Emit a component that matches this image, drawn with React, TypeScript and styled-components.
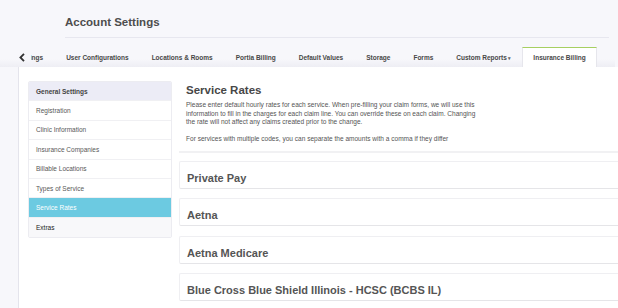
import React from "react";
import styled, { createGlobalStyle } from "styled-components";

const GlobalStyle = createGlobalStyle`
  html, body {
    margin: 0;
    padding: 0;
    background: #f7f7fb;
    font-family: "Liberation Sans", Arial, Helvetica, sans-serif;
    color: #555;
  }
  #root {
    min-height: 308px;
  }
`;

const tabs = [
  "Settings",
  "User Configurations",
  "Locations & Rooms",
  "Portia Billing",
  "Default Values",
  "Storage",
  "Forms",
  "Custom Reports",
  "Insurance Billing",
];

const navItems = [
  "Registration",
  "Clinic Information",
  "Insurance Companies",
  "Billable Locations",
  "Types of Service",
  "Service Rates",
];

const payers = [
  "Private Pay",
  "Aetna",
  "Aetna Medicare",
  "Blue Cross Blue Shield Illinois - HCSC (BCBS IL)",
];

export default function App() {
  return (
    <>
      <GlobalStyle />
      <Page>
        <Header>
          <Title>Account Settings</Title>
        </Header>

        <TabBar>
          <ScrollButton aria-label="Scroll tabs left">
            <svg width="6" height="9" viewBox="0 0 6 9">
              <path d="M5 0.8 L1.4 4.5 L5 8.2" fill="none" stroke="#333" strokeWidth="1.8" />
            </svg>
          </ScrollButton>
          <TabViewport>
            <TabStrip>
              {tabs.map((t) => (
                <Tab key={t} $active={t === "Insurance Billing"}>
                  {t}
                  {t === "Custom Reports" && <Caret>▾</Caret>}
                </Tab>
              ))}
            </TabStrip>
          </TabViewport>
        </TabBar>

        <Panel>
          <Sidebar>
            <NavHeader>General Settings</NavHeader>
            {navItems.map((item) => (
              <NavItem key={item} $active={item === "Service Rates"}>
                {item}
              </NavItem>
            ))}
            <NavFooter>Extras</NavFooter>
          </Sidebar>

          <Content>
            <Intro>
              <Heading>Service Rates</Heading>
              <Description>
                Please enter default hourly rates for each service. When pre-filling your claim forms, we will use this
                information to fill in the charges for each claim line. You can override these on each claim. Changing
                the rate will not affect any claims created prior to the change.
              </Description>
              <Description>
                For services with multiple codes, you can separate the amounts with a comma if they differ
              </Description>
            </Intro>

            {payers.map((p) => (
              <PayerCard key={p}>
                <PayerName>{p}</PayerName>
              </PayerCard>
            ))}
          </Content>
        </Panel>
      </Page>
    </>
  );
}

const Page = styled.div`
  display: flex;
  flex-direction: column;
  min-height: 308px;
  overflow: hidden;
`;

const Header = styled.div`
  margin: 0 9px 0 65px;
  padding-top: 15px;
  padding-bottom: 8px;
  border-bottom: 1px solid #e7e7ef;
`;

const Title = styled.h1`
  margin: 0;
  font-size: 11.5px;
  line-height: 14px;
  font-weight: 700;
  color: #4d4d4d;
`;

const TabBar = styled.div`
  display: flex;
  align-items: stretch;
  height: 20px;
  margin-top: 9px;
  margin-right: 3px;
  background: linear-gradient(to bottom, rgba(236, 236, 243, 0) 60%, #eeeef4 100%);
`;

const ScrollButton = styled.button`
  display: flex;
  align-items: center;
  justify-content: flex-start;
  width: 31px;
  padding: 0 0 0 19px;
  margin: 0;
  border: none;
  background: transparent;
  cursor: pointer;
`;

const TabViewport = styled.div`
  flex: 1;
  overflow: hidden;
`;

const TabStrip = styled.div`
  display: flex;
  height: 100%;
  margin-left: -25px;
`;

const Tab = styled.div<{ $active?: boolean }>`
  display: flex;
  align-items: center;
  flex-shrink: 0;
  padding: 0 ${(p) => (p.$active ? "10px" : "10.5px")};
  font-size: 6.5px;
  font-weight: 700;
  color: #474747;
  white-space: nowrap;
  box-sizing: border-box;
  background: ${(p) => (p.$active ? "#fff" : "transparent")};
  border-top: 1.5px solid ${(p) => (p.$active ? "#a6cf61" : "transparent")};
  border-left: 1px solid ${(p) => (p.$active ? "#e6e6ec" : "transparent")};
  border-right: 1px solid ${(p) => (p.$active ? "#e6e6ec" : "transparent")};
`;

const Caret = styled.span`
  font-size: 5px;
  margin-left: 1px;
  color: #666;
`;

const Panel = styled.div`
  flex: 1;
  display: flex;
  align-items: flex-start;
  margin-left: 18px;
  padding: 14px 0 0 9px;
  background: #fff;
  border-left: 1px solid #e4e4ec;
`;

const Sidebar = styled.nav`
  width: 144px;
  flex-shrink: 0;
  box-sizing: border-box;
  border: 1px solid #ececf1;
  border-radius: 2px;
  overflow: hidden;
`;

const NavRow = styled.div`
  display: flex;
  align-items: center;
  height: 19.4px;
  padding: 0 7px;
  box-sizing: border-box;
  font-size: 6.5px;
  border-bottom: 1px solid #f0f0f3;
  &:last-child {
    border-bottom: none;
  }
`;

const NavHeader = styled(NavRow)`
  background: #ececf6;
  font-weight: 700;
  color: #444;
`;

const NavItem = styled(NavRow)<{ $active?: boolean }>`
  background: ${(p) => (p.$active ? "#6ccae1" : "#fff")};
  color: ${(p) => (p.$active ? "#fff" : "#585858")};
`;

const NavFooter = styled(NavRow)`
  background: #f8f8fa;
  color: #222;
`;

const Content = styled.main`
  flex: 1;
  margin-left: 7px;
  min-width: 0;
`;

const Intro = styled.section`
  padding: 2px 0 7px 7px;
  border-bottom: 2px solid #f1f1f3;
  margin-bottom: 8px;
`;

const Heading = styled.h2`
  margin: 0 0 4px;
  font-size: 11.5px;
  line-height: 14px;
  font-weight: 700;
  color: #474747;
`;

const Description = styled.p`
  margin: 0 0 8.5px;
  width: 300px;
  font-size: 6.55px;
  line-height: 8.5px;
  color: #555;
  &:last-child {
    margin-bottom: 0;
  }
`;

const PayerCard = styled.div`
  height: 28px;
  margin-bottom: 9.5px;
  box-sizing: border-box;
  padding: 10px 7px 0;
  background: #fff;
  border: 1px solid #efeff2;
  border-right: none;
  border-bottom: 1.5px solid #e5e5e8;
  border-radius: 2px 0 0 2px;
`;

const PayerName = styled.div`
  font-size: 11px;
  line-height: 12px;
  font-weight: 700;
  color: #555;
  white-space: nowrap;
`;
